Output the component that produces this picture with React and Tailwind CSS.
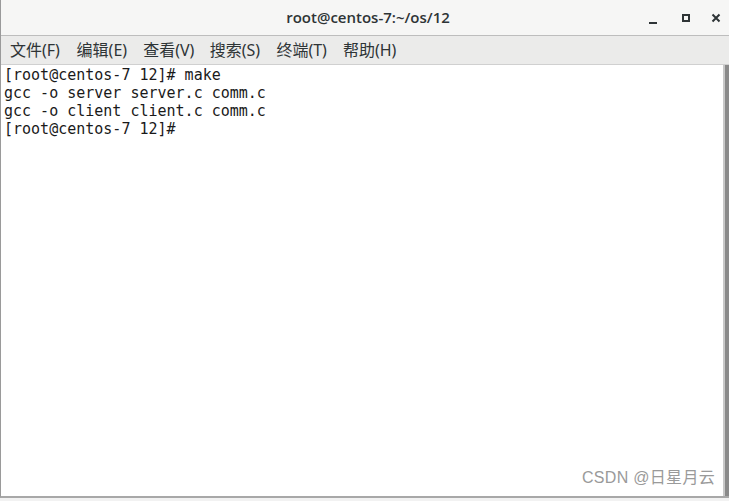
export default function App() {
  const menus = ["文件(F)", "编辑(E)", "查看(V)", "搜索(S)", "终端(T)", "帮助(H)"];
  const lines = [
    "[root@centos-7 12]# make",
    "gcc -o server server.c comm.c",
    "gcc -o client client.c comm.c",
    "[root@centos-7 12]#",
  ];
  return (
    <div className="w-[729px] h-[501px] bg-[#f2f2f2] overflow-hidden flex flex-col">
      <div className="flex flex-col h-[498px] border-l border-[#9a9a9a] border-b-2 border-b-[#a8a8a8] bg-white">
        <div className="h-[36px] shrink-0 bg-[#f6f6f5] border-b border-[#bdbdbd] flex items-center relative">
          <div className="flex-1 text-center text-[15px] font-semibold text-[#2e3436] pl-[6px]" style={{ fontFamily: '"Open Sans", "Noto Sans", sans-serif' }}>
            root@centos-7:~/os/12
          </div>
          <div className="absolute right-0 top-0 h-[36px] flex items-center">
            <div className="w-[33px] flex justify-center items-end h-[12px]">
              <div className="w-[8px] h-[2px] bg-[#2e3436] mt-[8px]" />
            </div>
            <div className="w-[34px] flex justify-center">
              <div className="w-[8px] h-[8px] border-2 border-[#2e3436]" />
            </div>
            <div className="w-[26px] flex justify-center">
              <svg width="10" height="10" viewBox="0 0 10 10">
                <path d="M1.5 1.5 L8.5 8.5 M8.5 1.5 L1.5 8.5" stroke="#2e3436" strokeWidth="2" />
              </svg>
            </div>
          </div>
        </div>
        <div className="h-[29px] shrink-0 bg-[#ebebea] border-b border-[#d0d0d0] flex items-center pl-[9px] text-[16px] text-[#2e3436]" style={{ fontFamily: '"Noto Sans", "Noto Sans CJK SC", sans-serif' }}>
          {menus.map((m) => (
            <span key={m} className="w-[66.6px] whitespace-nowrap">{m}</span>
          ))}
        </div>
        <div className="flex-1 flex min-h-0">
          <div className="flex-1 relative pl-[3px] pt-[1px]">
            <pre className="text-[15px] leading-[18px] text-[#1a1a1a] m-0" style={{ fontFamily: '"DejaVu Sans Mono", monospace' }}>
              {lines.join("\n")}
            </pre>
            <div className="absolute right-[8px] bottom-[6px] text-[16px] text-[#9a9a9a] tracking-[0.3px]" style={{ fontFamily: '"Liberation Sans", "Noto Sans CJK SC", sans-serif' }}>
              CSDN @日星月云
            </div>
          </div>
          <div className="w-[6px] flex">
            <div className="w-[2px] bg-[#c8c8c8]" />
            <div className="w-[4px] bg-[#8a8a8a]" />
          </div>
        </div>
      </div>
    </div>
  );
}
